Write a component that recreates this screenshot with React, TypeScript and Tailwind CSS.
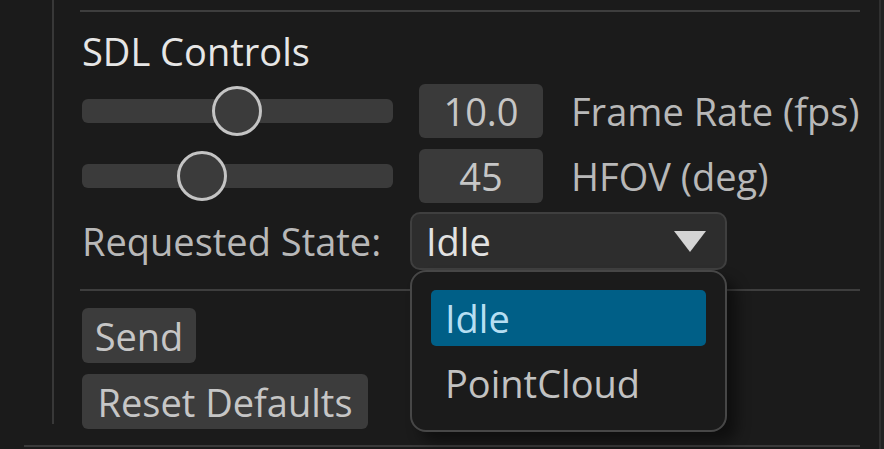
import React from "react";

const font = { fontFamily: '"Open Sans", "Noto Sans", sans-serif' };

function Slider({ knobLeft }: { knobLeft: string }) {
  return (
    <div className="relative w-[311px] h-[54px] flex items-center">
      <div className="w-full h-[24px] rounded-[6px] bg-[#3b3b3b]" />
      <div
        className={`absolute top-[2px] ${knobLeft} w-[50px] h-[50px] rounded-full border-[3px] border-[#c4c4c4] bg-[#3b3b3b]`}
      />
    </div>
  );
}

function NumBox({ value }: { value: string }) {
  return (
    <div className="w-[124px] h-[54px] rounded-[6px] bg-[#3a3a3a] flex items-center justify-center text-[#c6c6c6]">
      {value}
    </div>
  );
}

export default function App() {
  return (
    <div
      className="w-[884px] h-[449px] bg-[#1b1b1b] flex overflow-hidden text-[38px] leading-none"
      style={font}
    >
      <div className="w-[879px] flex flex-col">
        <div className="h-[424px] pl-[52px]">
          <div className="relative h-full border-l-2 border-[#383838] pl-[26px] pt-[10px]">
            <div className="w-[780px] h-[2px] bg-[#3e3e3e]" />
            <div className="ml-[2px] mt-[12px] h-[54px] flex items-center text-[#e6e6e6]">
              SDL Controls
            </div>
            <div className="ml-[2px] mt-[6px] flex items-center">
              <Slider knobLeft="left-[130px]" />
              <div className="ml-[26px]">
                <NumBox value="10.0" />
              </div>
              <div className="ml-[28px] text-[#b8b8b8]">Frame Rate (fps)</div>
            </div>
            <div className="ml-[2px] mt-[11px] flex items-center">
              <Slider knobLeft="left-[95px]" />
              <div className="ml-[26px]">
                <NumBox value="45" />
              </div>
              <div className="ml-[28px] text-[#b8b8b8]">HFOV (deg)</div>
            </div>
            <div className="ml-[2px] mt-[9px] flex items-center">
              <div className="w-[328px] text-[#b8b8b8]">Requested State:</div>
              <div className="w-[317px] h-[58px] rounded-[10px] bg-[#2d2d2d] border-2 border-[#3f3f3f] flex items-center justify-between pl-[14px] pr-[19px] text-[#e2e2e2]">
                <span>Idle</span>
                <svg width="32" height="21" viewBox="0 0 32 21">
                  <polygon points="0,0 32,0 16,21" fill="#d4d4d4" />
                </svg>
              </div>
            </div>
            <div className="mt-[19px] w-[780px] h-[2px] bg-[#3e3e3e]" />
            <div className="ml-[2px] mt-[17px] flex">
              <div className="w-[114px] h-[55px] rounded-[6px] bg-[#3c3c3c] flex items-center justify-center text-[#c6c6c6]">
                Send
              </div>
            </div>
            <div className="ml-[2px] mt-[11px] flex">
              <div className="w-[286px] h-[55px] rounded-[6px] bg-[#3c3c3c] flex items-center justify-center text-[#c6c6c6]">
                Reset Defaults
              </div>
            </div>

            <div className="absolute left-[356px] top-[270px] w-[317px] h-[162px] rounded-[16px] border-2 border-[#474747] bg-[#1b1b1b] shadow-[10px_10px_14px_rgba(0,0,0,0.45)] pt-[18px] px-[19px]">
              <div className="h-[56px] rounded-[5px] bg-[#005f87] flex items-center pl-[14px] text-[#b6def2]">
                Idle
              </div>
              <div className="h-[74px] flex items-center pl-[14px] text-[#c2c2c2]">
                PointCloud
              </div>
            </div>
          </div>
        </div>
        <div className="mt-[21px] ml-[24px] w-[836px] h-[2px] bg-[#3a3a3a]" />
      </div>
      <div className="w-[2px] h-full bg-[#303030]" />
      <div className="flex-1 h-full bg-[#222222]" />
    </div>
  );
}
